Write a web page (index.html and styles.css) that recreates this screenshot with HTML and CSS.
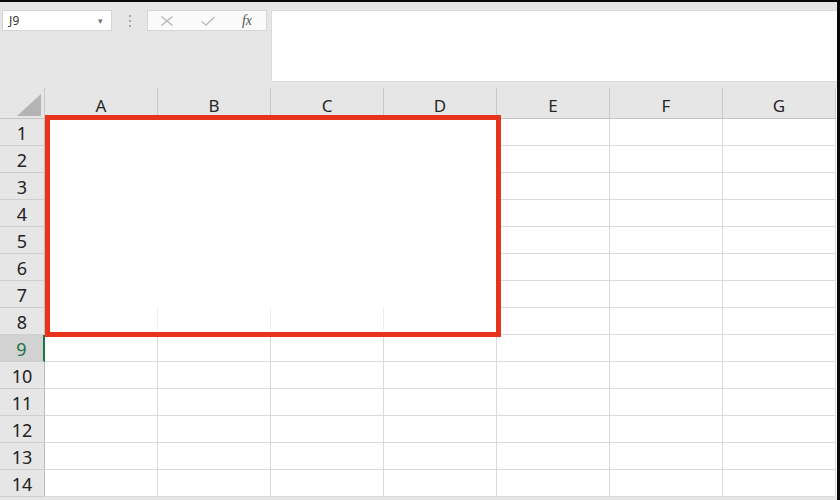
FILE: index.html
```html
<!DOCTYPE html>
<html>
<head>
<meta charset="utf-8">
<link rel="stylesheet" href="styles.css">
</head>
<body>
<div class="frame">
  <div class="toolbar">
    <div class="namebox"><span class="ref">J9</span><span class="drop">&#9662;</span></div>
    <div class="grip">
      <svg width="4" height="14" viewBox="0 0 4 14"><rect x="1" y="1" width="2" height="2" fill="#a8a8a8"/><rect x="1" y="6" width="2" height="2" fill="#a8a8a8"/><rect x="1" y="11" width="2" height="2" fill="#a8a8a8"/></svg>
    </div>
    <div class="fxbox">
      <svg class="ico" width="14" height="12" viewBox="0 0 14 12"><path d="M1.5 1.5 L12.5 10.5 M12.5 1.5 L1.5 10.5" stroke="#b5b5b5" stroke-width="1.3" fill="none"/></svg>
      <svg class="ico" width="16" height="12" viewBox="0 0 16 12"><path d="M1.5 6.5 L6 10 L14.5 2" stroke="#bdbdbd" stroke-width="1.5" fill="none"/></svg>
      <span class="fx">fx</span>
    </div>
    <div class="formula"></div>
  </div>
  <div class="sheet">
    <div class="grid">
      <div class="corner"><span class="tri"></span></div>
      <div class="ch">A</div><div class="ch">B</div><div class="ch">C</div><div class="ch">D</div><div class="ch">E</div><div class="ch">F</div><div class="ch">G</div>

      <div class="rh">1</div><div class="c"></div><div class="c"></div><div class="c"></div><div class="c"></div><div class="c"></div><div class="c"></div><div class="c"></div>
      <div class="rh">2</div><div class="c"></div><div class="c"></div><div class="c"></div><div class="c"></div><div class="c"></div><div class="c"></div><div class="c"></div>
      <div class="rh">3</div><div class="c"></div><div class="c"></div><div class="c"></div><div class="c"></div><div class="c"></div><div class="c"></div><div class="c"></div>
      <div class="rh">4</div><div class="c"></div><div class="c"></div><div class="c"></div><div class="c"></div><div class="c"></div><div class="c"></div><div class="c"></div>
      <div class="rh">5</div><div class="c"></div><div class="c"></div><div class="c"></div><div class="c"></div><div class="c"></div><div class="c"></div><div class="c"></div>
      <div class="rh">6</div><div class="c"></div><div class="c"></div><div class="c"></div><div class="c"></div><div class="c"></div><div class="c"></div><div class="c"></div>
      <div class="rh">7</div><div class="c"></div><div class="c"></div><div class="c"></div><div class="c"></div><div class="c"></div><div class="c"></div><div class="c"></div>
      <div class="rh">8</div><div class="c"></div><div class="c"></div><div class="c"></div><div class="c"></div><div class="c"></div><div class="c"></div><div class="c"></div>
      <div class="rh sel">9</div><div class="c"></div><div class="c"></div><div class="c"></div><div class="c"></div><div class="c"></div><div class="c"></div><div class="c"></div>
      <div class="rh">10</div><div class="c"></div><div class="c"></div><div class="c"></div><div class="c"></div><div class="c"></div><div class="c"></div><div class="c"></div>
      <div class="rh">11</div><div class="c"></div><div class="c"></div><div class="c"></div><div class="c"></div><div class="c"></div><div class="c"></div><div class="c"></div>
      <div class="rh">12</div><div class="c"></div><div class="c"></div><div class="c"></div><div class="c"></div><div class="c"></div><div class="c"></div><div class="c"></div>
      <div class="rh">13</div><div class="c"></div><div class="c"></div><div class="c"></div><div class="c"></div><div class="c"></div><div class="c"></div><div class="c"></div>
      <div class="rh">14</div><div class="c"></div><div class="c"></div><div class="c"></div><div class="c"></div><div class="c"></div><div class="c"></div><div class="c"></div>
    </div>
    <div class="highlight">
      <div class="faint">
        <span></span><span></span><span></span><span></span>
      </div>
    </div>
  </div>
</div>
</body>
</html>
```

FILE: styles.css
```css
html, body {
  margin: 0;
  padding: 0;
  background: #ffffff;
}
.frame {
  width: 837px;
  height: 498px;
  border-top: 2px solid #0a0a0a;
  border-right: 3px solid #0a0a0a;
  background: #e6e6e6;
  overflow: hidden;
  font-family: "Noto Sans", "Open Sans", sans-serif;
}
.toolbar {
  height: 86px;
  display: flex;
  align-items: flex-start;
  padding-top: 8px;
  box-sizing: border-box;
  background: #e6e6e6;
}
.namebox {
  margin-left: 2px;
  width: 110px;
  height: 21px;
  background: #fff;
  border: 1px solid #d4d4d4;
  box-sizing: border-box;
  display: flex;
  align-items: center;
  justify-content: space-between;
  padding: 0 8px 0 6px;
}
.ref {
  font-size: 12px;
  color: #333;
  letter-spacing: 0.3px;
}
.drop {
  font-size: 9px;
  color: #777;
}
.grip {
  width: 35px;
  height: 21px;
  display: flex;
  align-items: center;
  justify-content: center;
}
.fxbox {
  width: 120px;
  height: 21px;
  background: #fafafa;
  border: 1px solid #d6d6d6;
  box-sizing: border-box;
  display: flex;
  align-items: center;
  justify-content: space-between;
  padding: 0 14px 0 12px;
}
.fx {
  font-family: "Liberation Serif", "DejaVu Serif", serif;
  font-style: italic;
  font-size: 14px;
  color: #555;
  line-height: 1;
}
.formula {
  margin-left: 4px;
  flex: 1;
  height: 72px;
  background: #fff;
  border: 1px solid #dcdcdc;
  border-right: none;
  box-sizing: border-box;
}
.sheet {
  position: relative;
}
.grid {
  display: grid;
  grid-template-columns: 45px repeat(7, 113px);
  grid-template-rows: 31px repeat(14, 27px);
  background: #fff;
}
.corner {
  background: #e6e6e6;
  border-right: 1px solid #c8c8c8;
  border-bottom: 1px solid #c4c4c4;
  position: relative;
}
.tri {
  position: absolute;
  right: 3px;
  bottom: 2px;
  width: 0;
  height: 0;
  border-left: 24px solid transparent;
  border-bottom: 22px solid #b4b4b4;
}
.ch {
  background: #e6e6e6;
  border-right: 1px solid #c8c8c8;
  border-bottom: 1px solid #c4c4c4;
  display: flex;
  align-items: flex-end;
  justify-content: center;
  padding-bottom: 1px;
  font-size: 17px;
  line-height: 22px;
  color: #262626;
  box-sizing: border-box;
}
.rh {
  background: #e6e6e6;
  border-right: 1px solid #bdbdbd;
  border-bottom: 1px solid #cfcfcf;
  display: flex;
  align-items: center;
  justify-content: center;
  font-size: 18px;
  color: #222;
  box-sizing: border-box;
  padding-top: 1px;
}
.rh.sel {
  background: #d2d2d2;
  color: #217346;
  border-right: 2px solid #217346;
}
.c {
  border-right: 1px solid #dadada;
  border-bottom: 1px solid #dadada;
  box-sizing: border-box;
}
.highlight {
  position: absolute;
  left: 45px;
  top: 27px;
  width: 456px;
  height: 222px;
  border: 5px solid #e8341c;
  box-sizing: border-box;
  background: #fff;
}
.faint {
  position: absolute;
  left: 0;
  right: 0;
  bottom: 2px;
  height: 22px;
  display: grid;
  grid-template-columns: 108px 113px 113px 113px;
}
.faint span {
  border-right: 1px solid #ececec;
}
.faint span:last-child {
  border-right: none;
}
```
